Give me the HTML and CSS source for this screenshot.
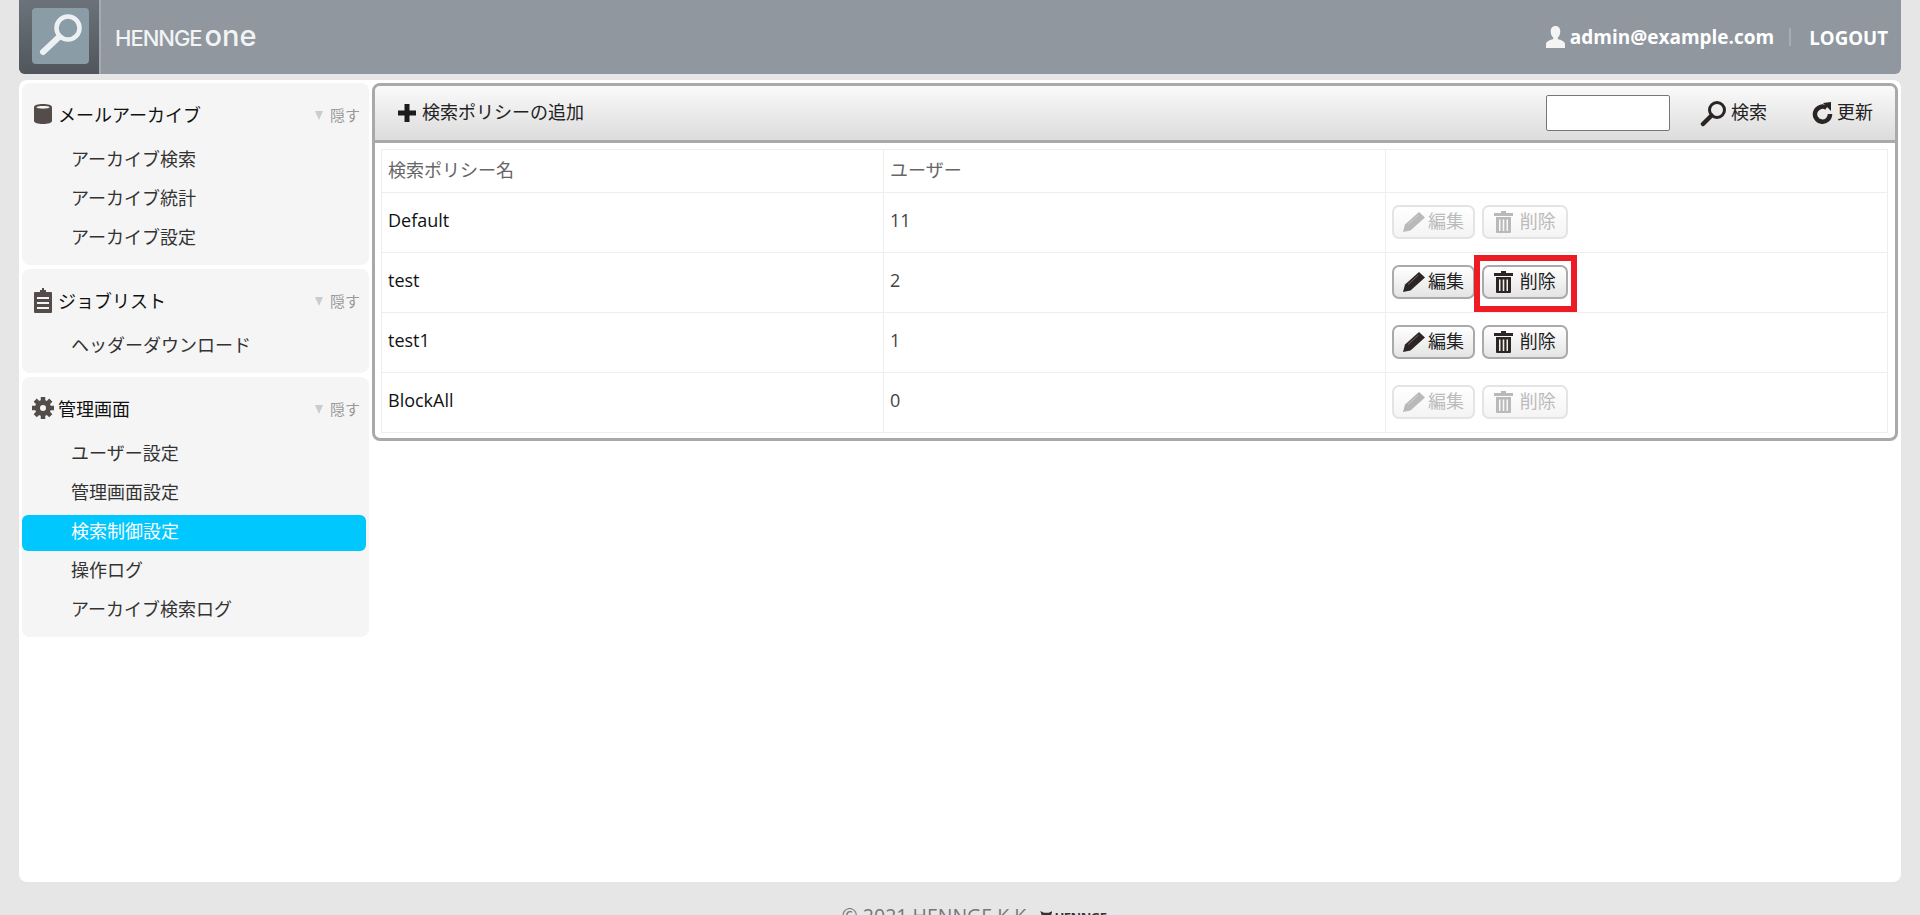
FILE: index.html
```html
<!DOCTYPE html>
<html lang="ja">
<head>
  <meta charset="UTF-8">
  <title>検索制御設定</title>
  <link rel="stylesheet" href="styles.css">
</head>
<body>
  <svg class="defs" aria-hidden="true">
    <symbol id="pencil" viewBox="0 0 22 20"><path d="M16 0l6 5.500L7.500 18.500 0 20l2-7.500z"/><path d="M5 12.500L15.500 3" stroke="#fff" stroke-opacity=".3" stroke-width="1"/></symbol>
    <symbol id="trash" viewBox="0 0 19 22"><path fill-rule="evenodd" d="M7 0h5v2h7v3H0V2h7zM2 6h15v15a1 1 0 0 1-1 1H3a1 1 0 0 1-1-1zm3 2.500V20h1.500V8.500zm3.700 0V20h1.600V8.500zm3.800 0V20H14V8.500z"/></symbol>
  </svg>

  <header class="topbar">
    <div class="logo">
      <div class="logo-tile">
        <svg width="57" height="56" viewBox="0 0 57 56"><circle cx="36" cy="20" r="11.500" fill="none" stroke="#eef1f3" stroke-width="4.500"/><path d="M11 44L27 29" stroke="#eef1f3" stroke-width="6" stroke-linecap="round"/></svg>
      </div>
    </div>
    <div class="brand">HENNGE <span class="brand-one">one</span></div>
    <div class="account">
      <svg width="19" height="22" viewBox="0 0 19 22" fill="#f4f4f4"><path d="M9.500 0c3 0 4.800 2.200 4.800 5.500 0 2.500-1 4.800-2.500 6v1.500c3 1 7.200 2.500 7.200 5V22H0v-4c0-2.500 4.200-4 7.200-5v-1.500c-1.500-1.200-2.500-3.500-2.500-6C4.700 2.200 6.500 0 9.500 0z"/></svg>
      <span class="account-name">admin@example.com</span>
      <span class="account-sep"></span>
      <a class="logout">LOGOUT</a>
    </div>
  </header>

  <div class="main">
    <nav class="sidebar">
      <section class="side-group">
        <div class="side-head">
          <svg class="side-icon" width="18" height="20" viewBox="0 0 18 20" fill="#544c4a"><path fill-rule="evenodd" d="M9 0c5 0 9 1.300 9 3v14c0 1.700-4 3-9 3s-9-1.300-9-3V3c0-1.700 4-3 9-3zm0 2C5.200 2 2.500 2.700 2.500 3.300S5.200 4.700 9 4.700s6.500-.8 6.500-1.400S12.800 2 9 2z"/></svg>
          <span class="side-title">メールアーカイブ</span>
          <span class="side-hide">隠す</span>
        </div>
        <a class="side-item">アーカイブ検索</a>
        <a class="side-item">アーカイブ統計</a>
        <a class="side-item">アーカイブ設定</a>
      </section>
      <section class="side-group">
        <div class="side-head">
          <svg class="side-icon" width="18" height="25" viewBox="0 0 18 25" fill="#544c4a"><path fill-rule="evenodd" d="M6 2h2V0h2v2h2v2h5a1 1 0 0 1 1 1v19a1 1 0 0 1-1 1H1a1 1 0 0 1-1-1V5a1 1 0 0 1 1-1h5zM3 9v2h12V9zm0 5v2h12v-2zm0 5v2h12v-2z"/></svg>
          <span class="side-title">ジョブリスト</span>
          <span class="side-hide">隠す</span>
        </div>
        <a class="side-item">ヘッダーダウンロード</a>
      </section>
      <section class="side-group">
        <div class="side-head">
          <svg class="side-icon" width="22" height="22" viewBox="0 0 22 22"><circle cx="11" cy="11" r="5.500" fill="none" stroke="#544c4a" stroke-width="5"/><path d="M11 0v22M0 11h22M3.200 3.200l15.600 15.600M18.800 3.200L3.200 18.800" stroke="#544c4a" stroke-width="4.500" stroke-dasharray="4 14"/></svg>
          <span class="side-title">管理画面</span>
          <span class="side-hide">隠す</span>
        </div>
        <a class="side-item">ユーザー設定</a>
        <a class="side-item">管理画面設定</a>
        <a class="side-item active">検索制御設定</a>
        <a class="side-item">操作ログ</a>
        <a class="side-item">アーカイブ検索ログ</a>
      </section>
    </nav>

    <div class="content">
      <div class="panel">
        <div class="toolbar">
          <a class="tool tool-add">
            <svg width="18" height="18" viewBox="0 0 18 18" fill="#1c1a1a"><path d="M6.500 0h5v6.500H18v5h-6.500V18h-5v-6.500H0v-5h6.500z"/></svg>
            <span class="tool-text">検索ポリシーの追加</span>
          </a>
          <input class="search-box" type="text">
          <a class="tool tool-search">
            <svg width="27" height="27" viewBox="0 0 27 27"><circle cx="17" cy="10" r="7.500" fill="none" stroke="#2a2422" stroke-width="3"/><path d="M11.500 15.500L3 24" stroke="#2a2422" stroke-width="4.500" stroke-linecap="round"/></svg>
            <span class="tool-text">検索</span>
          </a>
          <a class="tool tool-refresh">
            <svg width="21" height="22" viewBox="0 0 21 22"><path d="M14.500 5.800A7.500 7.500 0 1 0 18 12" fill="none" stroke="#2a2422" stroke-width="4.500"/><path d="M11 1l8-1v9z" fill="#2a2422"/></svg>
            <span class="tool-text">更新</span>
          </a>
        </div>
        <table class="policy-table">
          <thead>
            <tr><th>検索ポリシー名</th><th>ユーザー</th><th></th></tr>
          </thead>
          <tbody>
            <tr>
              <td class="name">Default</td><td>11</td>
              <td class="actions">
                <button class="btn btn-edit" disabled><svg width="22" height="20"><use href="#pencil"/></svg>編集</button>
                <button class="btn btn-del" disabled><svg width="19" height="22"><use href="#trash"/></svg>削除</button>
              </td>
            </tr>
            <tr>
              <td class="name">test</td><td>2</td>
              <td class="actions">
                <button class="btn btn-edit"><svg width="22" height="20"><use href="#pencil"/></svg>編集</button>
                <button class="btn btn-del"><svg width="19" height="22"><use href="#trash"/></svg>削除</button>
                <span class="highlight"></span>
              </td>
            </tr>
            <tr>
              <td class="name">test1</td><td>1</td>
              <td class="actions">
                <button class="btn btn-edit"><svg width="22" height="20"><use href="#pencil"/></svg>編集</button>
                <button class="btn btn-del"><svg width="19" height="22"><use href="#trash"/></svg>削除</button>
              </td>
            </tr>
            <tr>
              <td class="name">BlockAll</td><td>0</td>
              <td class="actions">
                <button class="btn btn-edit" disabled><svg width="22" height="20"><use href="#pencil"/></svg>編集</button>
                <button class="btn btn-del" disabled><svg width="19" height="22"><use href="#trash"/></svg>削除</button>
              </td>
            </tr>
          </tbody>
        </table>
      </div>
    </div>
  </div>

  <footer class="footer">
    © 2021 HENNGE K.K.
    <span class="footer-logo"><span class="footer-mark"></span>HENNGE</span>
  </footer>
</body>
</html>
```

FILE: styles.css
```css
html, body {
  margin: 0;
  height: 915px;
  overflow: hidden;
}

body {
  background: #e6e6e6;
  color: #333;
  font-family: "Open Sans", "Noto Sans CJK JP", sans-serif;
  font-size: 18px;
  padding: 0 19px;
  box-sizing: border-box;
}

.defs {
  display: none;
}

a {
  cursor: pointer;
}

/* header */
.topbar {
  display: flex;
  align-items: center;
  height: 74px;
  background: #90979f;
  border-radius: 0 0 6px 6px;
  overflow: hidden;
  color: #fff;
}

.logo {
  width: 82px;
  height: 74px;
  padding: 8px 0 0 13px;
  box-sizing: border-box;
  background: linear-gradient(#6b7279, #50565c);
  border-right: 2px solid #a3aab1;
}

.logo-tile {
  width: 57px;
  height: 56px;
  background: #8a9ca6;
  border-radius: 4px;
}

.logo-tile svg {
  display: block;
}

.brand {
  margin-left: 14px;
  margin-top: 2px;
  font-family: "Inter", sans-serif;
  font-size: 22px;
  font-weight: 500;
  letter-spacing: -1px;
  word-spacing: -2px;
  color: #f2f3f4;
}

.brand-one {
  font-size: 29px;
  font-weight: 500;
  line-height: 20px;
  letter-spacing: 0;
}

.account {
  margin-left: auto;
  margin-right: 13px;
  display: flex;
  align-items: center;
  font-size: 19px;
  font-weight: bold;
}

.account-name {
  margin-left: 5px;
}

.account-sep {
  width: 2px;
  height: 18px;
  background: #a6adb4;
  margin: 0 18px 0 15px;
}

.logout {
  font-size: 18.700px;
}

/* layout */
.main {
  display: flex;
  gap: 3px;
  height: 802px;
  margin-top: 6px;
  padding: 3px;
  box-sizing: border-box;
  background: #fff;
  border-radius: 8px;
}

.sidebar {
  width: 347px;
  flex-shrink: 0;
  display: flex;
  flex-direction: column;
  gap: 4px;
}

.side-group {
  background: #f5f5f5;
  border-radius: 8px;
  padding-bottom: 8px;
}

.side-head {
  display: flex;
  align-items: center;
  height: 42px;
  padding: 10px 9px 0 10px;
  margin-bottom: 8px;
}

.side-icon {
  width: 22px;
  flex-shrink: 0;
}

.side-title {
  margin-left: 4px;
  color: #111;
}

.side-hide {
  margin-left: auto;
  font-size: 15px;
  color: #999;
  display: flex;
  align-items: center;
}

.side-hide::before {
  content: "";
  border: 4.500px solid transparent;
  border-top: 9px solid #ccc;
  border-bottom: 0;
  margin: 3px 7px 0 0;
}

.side-item {
  display: block;
  width: 344px;
  height: 36px;
  margin-top: 3px;
  padding-left: 49px;
  box-sizing: border-box;
  line-height: 32px;
  color: #333;
  border-radius: 6px;
}

.side-item.active {
  background: #00c8ff;
  color: #fff;
}

/* panel */
.content {
  flex: 1;
  min-width: 0;
}

.panel {
  border: 3px solid #a9a9a9;
  border-radius: 8px;
  padding-bottom: 5px;
  height: 358px;
  box-sizing: border-box;
}

.toolbar {
  display: flex;
  align-items: center;
  height: 54px;
  border-bottom: 3px solid #a9a9a9;
  border-radius: 5px 5px 0 0;
  background: linear-gradient(#fafafa, #dcdcdc);
}

.tool {
  display: flex;
  align-items: center;
  color: #222;
  gap: 4px;
}

.tool-text {
  padding-bottom: 5px;
}

.tool-add {
  margin-left: 23px;
  margin-right: auto;
  gap: 6px;
}

.search-box {
  width: 124px;
  height: 36px;
  box-sizing: border-box;
  border: 1px solid #777;
  border-radius: 2px;
  background: #fff;
}

.tool-search {
  margin-left: 30px;
}

.tool-refresh {
  margin-left: 45px;
  margin-right: 22px;
}

.policy-table {
  width: 1507px;
  margin: 6px 0 0 6px;
  border-collapse: collapse;
  table-layout: fixed;
  border: 1px solid #eee;
}

.policy-table th, .policy-table td {
  border: 1px solid #eee;
  text-align: left;
  padding: 0 6px 5px;
  font-weight: normal;
}

.policy-table th {
  height: 37px;
  color: #666;
}

.policy-table td {
  height: 54px;
  color: #444;
}

.policy-table td.name {
  color: #111;
}

.policy-table td.actions {
  position: relative;
  padding-bottom: 2px;
  height: 57px;
}

.btn {
  display: inline-flex;
  align-items: center;
  height: 34px;
  padding: 0 0 4px 9px;
  vertical-align: middle;
  white-space: nowrap;
  font: inherit;
  color: #222;
  border: 2px solid #aaa;
  border-radius: 7px;
  background: linear-gradient(#fff, #e4e4e4);
}

.btn svg {
  fill: #2c2523;
  flex-shrink: 0;
  margin-top: 4px;
}

.btn-edit {
  width: 83px;
  gap: 3px;
  margin-right: 2px;
}

.btn-del {
  width: 86px;
  padding-left: 10px;
  gap: 7px;
}

.btn:disabled {
  color: #bbb;
  border-color: #e4e4e4;
  background: linear-gradient(#fff, #f4f4f4);
}

.btn:disabled svg {
  fill: #b9b9b9;
}

/* red annotation round the delete button */
.highlight {
  position: absolute;
  left: 88px;
  top: 2px;
  width: 103px;
  height: 57px;
  box-sizing: border-box;
  border: 6px solid #ed1c24;
}

.footer {
  margin-top: 20px;
  padding-left: 28px;
  text-align: center;
  font-size: 19.500px;
  color: #777;
}

.footer-logo {
  display: inline-flex;
  align-items: center;
  margin-left: 4px;
  font-size: 13px;
  font-weight: bold;
  letter-spacing: -.5px;
  color: #333;
}

.footer-mark {
  width: 12px;
  height: 12px;
  margin-right: 2px;
  background: #333;
  clip-path: polygon(0 0, 30% 15%, 70% 15%, 100% 0, 85% 50%, 100% 100%, 0 100%, 15% 50%);
}
```
